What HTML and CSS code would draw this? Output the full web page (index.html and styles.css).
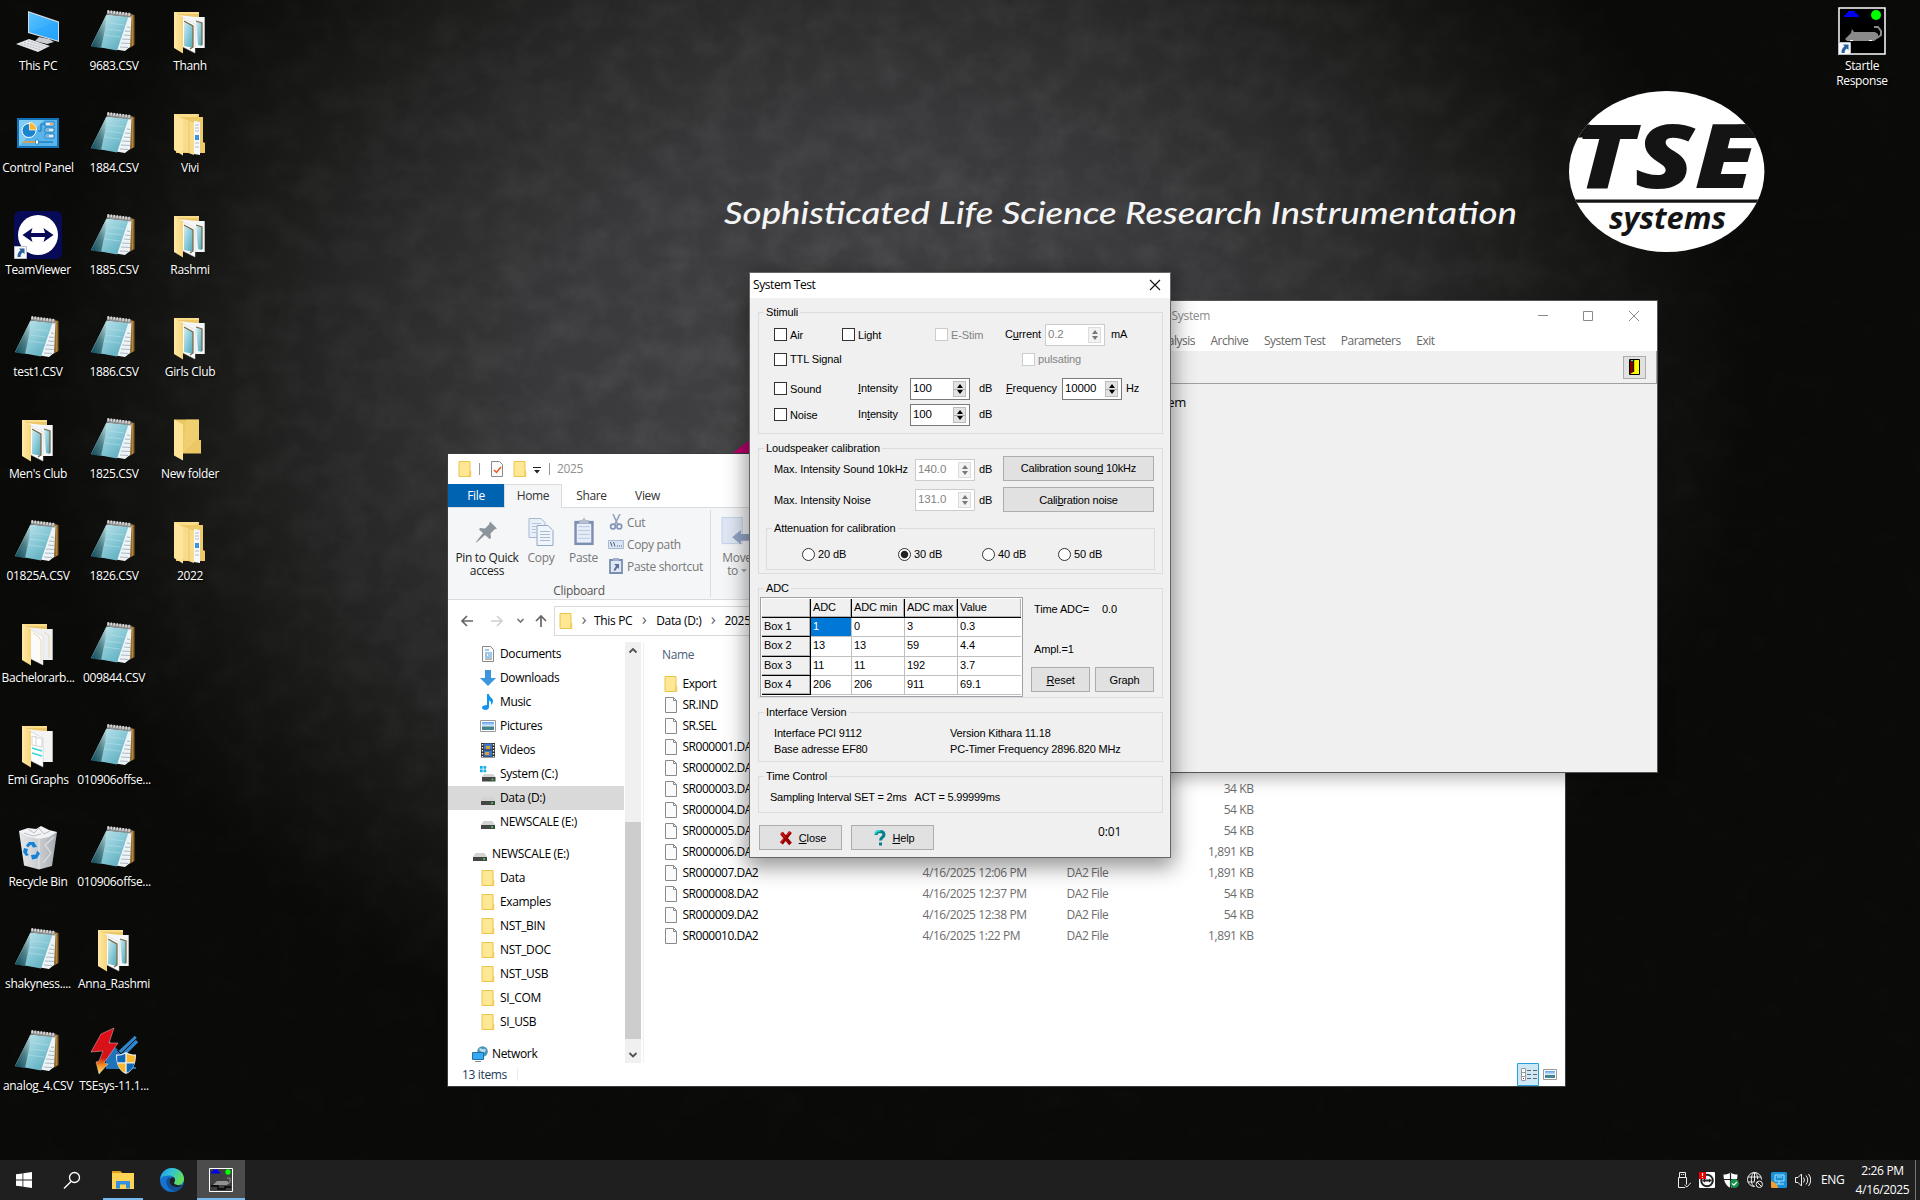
FILE: index.html
```html
<!DOCTYPE html>
<html lang="en">
<head>
<meta charset="utf-8">
<title>Desktop</title>
<link rel="stylesheet" href="styles.css">
</head>
<body>
<svg class="defs" width="0" height="0" aria-hidden="true">
  <defs>
    <linearGradient id="gTeal" x1="0" y1="0" x2="1" y2="1"><stop offset="0" stop-color="#d3eef2"/><stop offset=".5" stop-color="#8ccbd8"/><stop offset="1" stop-color="#4fa5b9"/></linearGradient>
    <linearGradient id="gTealDark" x1="1" y1="0" x2="0" y2="1"><stop offset="0" stop-color="#b9dbe0"/><stop offset=".5" stop-color="#4f7f88"/><stop offset="1" stop-color="#0c4a58"/></linearGradient>
    <linearGradient id="gFold" x1="0" y1="0" x2="1" y2="0"><stop offset="0" stop-color="#ffe9a6"/><stop offset="1" stop-color="#f6d67c"/></linearGradient>
    <linearGradient id="gBlue" x1="0" y1="0" x2="1" y2="1"><stop offset="0" stop-color="#5cc4ff"/><stop offset="1" stop-color="#1b9bf5"/></linearGradient>
    <linearGradient id="gBin" x1="0" y1="0" x2="1" y2="0"><stop offset="0" stop-color="#e6e8ea"/><stop offset=".55" stop-color="#c9cccf"/><stop offset="1" stop-color="#a7abb0"/></linearGradient>
    <linearGradient id="gRed" x1="0" y1="0" x2="0" y2="1"><stop offset="0" stop-color="#e30c17"/><stop offset=".65" stop-color="#d21419"/><stop offset=".8" stop-color="#f08a1c"/><stop offset="1" stop-color="#ffe070"/></linearGradient>
    <linearGradient id="gEdge" x1="0" y1="0" x2="1" y2=".4"><stop offset="0" stop-color="#1f9be6"/><stop offset=".5" stop-color="#32c3d4"/><stop offset="1" stop-color="#62de5a"/></linearGradient>
    <linearGradient id="gSky" x1="0" y1="0" x2="0" y2="1"><stop offset="0" stop-color="#5a9ff0"/><stop offset=".5" stop-color="#d8ecfa"/><stop offset=".65" stop-color="#3c7f86"/><stop offset="1" stop-color="#4b8a99"/></linearGradient>
  </defs>
  <symbol id="notepad" viewBox="0 0 48 48">
    <path d="M41 7l3.500 1v30l-5 3z" fill="#8a6428"/><path d="M42.300 8v31" stroke="#c79a4f" stroke-width=".8"/>
    <path d="M39 8l2.500 1-1.500 31-5 4-24-4z" fill="#eef3f6"/>
    <path d="M37 20l3 .5M35 24l5 .5M34 28l6 .5M32 32l8 .5M31 36l9 .5M30 40l8 .5" stroke="#a9bac6" stroke-width="1.100"/>
    <path d="M16.500 7.500l22 2L27 43.500l-16-3L1 39z" fill="url(#gTeal)"/>
    <path d="M16.500 7.500L1 39.500l10 1.500 4.500-21z" fill="url(#gTealDark)"/>
    <path d="M16 22l16 2M14 28l16 2M19 16l15 2" stroke="#bfe3ea" stroke-width=".7" opacity=".7"/>
    <path d="M17 5.500l24 3" stroke="#8e8e8e" stroke-width="4"/><path d="M17.500 4.500l23.500 3" stroke="#dcdcdc" stroke-width="3" stroke-dasharray="1.500 1.500"/>
  </symbol>
  <symbol id="folderBase" viewBox="0 0 48 48">
    <path d="M8 5h25v23h2v11H8z" fill="#edc866"/><path d="M8 5h25v2H10z" fill="#f9dd8c"/>
  </symbol>
  <symbol id="folderFlap" viewBox="0 0 48 48"><path d="M8 5l9 5v36.500L8 41z" fill="url(#gFold)"/></symbol>
  <symbol id="folderNotes" viewBox="0 0 48 48">
    <use href="#folderBase"/>
    <path d="M12 8l18 2 8.700 0v31H28z" fill="#f4f6f8"/>
    <path d="M15 10l14 7v29l-12-6z" fill="#fff" stroke="#c8c8c8" stroke-width=".5"/>
    <path d="M18 14l9 5v22l-9-2z" fill="url(#gTeal)"/><path d="M18 14l9 5v21l-3 2" fill="none" stroke="#7d6a48" stroke-width="1.300"/>
    <path d="M30 14l6 2v23l-4-1z" fill="url(#gTeal)"/><path d="M30 14l6 2v22" fill="none" stroke="#7d6a48" stroke-width="1.300"/>
    <use href="#folderFlap"/>
  </symbol>
  <symbol id="folderDocs" viewBox="0 0 48 48">
    <use href="#folderBase"/>
    <path d="M12 8l18 2 8.700 0v31H28z" fill="#eef0f2"/><path d="M30 13l5 4v22" fill="none" stroke="#ead9a8"/>
    <path d="M15 10l14 7v29l-12-6z" fill="#fbfbfb" stroke="#ccc" stroke-width=".5"/><path d="M19 14l6 4 2 4v21" fill="none" stroke="#ead9a8"/>
    <use href="#folderFlap"/>
  </symbol>
  <symbol id="folderGraphs" viewBox="0 0 48 48">
    <use href="#folderBase"/>
    <path d="M12 8l18 2 8.700 0v31H28z" fill="#f4f4f4"/>
    <path d="M15 10l14 7v29l-12-6z" fill="#fff" stroke="#bbb" stroke-width=".5"/><path d="M18 15l10 3v8l-10-2zM22 15v10" fill="none" stroke="#c8c8c8" stroke-width=".8"/><path d="M18 27l10 3M18 32l10 3" stroke="#35d5dc" stroke-width="1.500"/>
    <use href="#folderFlap"/>
  </symbol>
  <symbol id="folderNested" viewBox="0 0 48 48">
    <path d="M8 5h25v3h4v25l2 1v10H10z" fill="#eec967"/><path d="M8 5h25l-3 3H11z" fill="#f9dd8c"/>
    <path d="M28 12l6 1v33l-6-1z" fill="#f6f8fa"/><path d="M29 16h4M29 19h4M29 22h4M29 34h4M29 38h4" stroke="#aab" stroke-width=".8"/><path d="M29 26h4v5h-4z" fill="#3b93d8"/>
    <path d="M14 8l14 6v32l-14-5z" fill="#f8dc8a"/><path d="M23 12v32" stroke="#e8c870"/>
    <path d="M8 5l9 5v36.500L8 41z" fill="#ffe59b"/>
  </symbol>
  <symbol id="folderEmpty" viewBox="0 0 48 48"><path d="M8 4.500h25v20.500h2v13.500H8z" fill="#ecc865"/><path d="M20 4.500h13v18L17 38z" fill="#f4d67d" opacity=".5"/><path d="M8 4.500l9 5v36L8 40.500z" fill="#ffe498"/></symbol>
  <symbol id="thisPc" viewBox="0 0 48 48">
    <path d="M14 4l31 10.500v20.500L14 26z" fill="#d6dbe0"/><path d="M15 5.500l29 10v18L15 25z" fill="url(#gBlue)"/><path d="M15 25L44 15.500v18z" fill="#2aa7ff" opacity=".5"/>
    <path d="M25 30l10 2 5 3-7 2-12-3z" fill="#c9ced4"/><path d="M2 37l13-5 21 7-12 6z" fill="#e5e7ea"/><path d="M7 37l20 6M10 35.500l20 6M14 34l19 6" stroke="#a9adb4" stroke-width=".8" stroke-dasharray="2 1"/>
  </symbol>
  <symbol id="controlPanel" viewBox="0 0 48 48">
    <path d="M3 9h42v30H3z" fill="#1272b5"/><path d="M5 11h38v26H5z" fill="#7fccf5"/><path d="M5 37L30 11h13v26z" fill="#59b4ec"/>
    <circle cx="15" cy="21.500" r="7" fill="#1a84cf" stroke="#fff"/><path d="M15.500 21V13.500a7 7 0 0 1 7 7.500z" fill="#ffb52e" stroke="#fff" stroke-width=".7"/>
    <path d="M24 22h3v-7h4" fill="none" stroke="#1272b5"/><path d="M31 13h9v4h-9zM31 19h9v4h-9zM31 25h9v4h-9z" fill="#d8f0fc" stroke="#1272b5" stroke-width=".9"/><path d="M36 15h3" stroke="#ff8b1f" stroke-width="1.500"/><path d="M32 21h3M32 27h3" stroke="#1272b5"/>
    <path d="M9 33h14" stroke="#ff9b1f" stroke-width="1.400"/><path d="M23 33h16" stroke="#1272b5" stroke-width="1.200"/><path d="M21.500 31h3v4h-3z" fill="#fff" stroke="#1272b5" stroke-width=".7"/>
  </symbol>
  <symbol id="shortcut" viewBox="0 0 13 13"><path d="M.5.5h12v12H.5z" fill="#f6f8fb" stroke="#b9bfc7"/><path d="M5 2.500h5.500V8L8.800 6.400C7 7.500 6.500 9 6.700 11H3.600C3.300 8 4.500 5.800 6.600 4.300z" fill="#2a5f9e"/></symbol>
  <symbol id="teamviewer" viewBox="0 0 48 48"><rect width="48" height="48" rx="6" fill="#070a57"/><circle cx="24" cy="24" r="20" fill="#fff"/><path d="M8.500 24l10-7-1.500 5h14l-1.500-5 10 7-10 7 1.500-5H17l1.500 5z" fill="#070a57"/><use href="#shortcut" x="0" y="35" width="13" height="13"/></symbol>
  <symbol id="recycle" viewBox="0 0 48 48">
    <path d="M5 8l38 1-5 34-13 3.500-15-4z" fill="url(#gBin)"/><path d="M5 8l9-3 8 1 5-3 8 4 8 2-8 5-10 2-13-3z" fill="#f2f3f4"/><path d="M14 6l6 4 5-5 5 6 6-3M10 10l9 3 8-2" fill="none" stroke="#b4b8bc" stroke-width=".9"/><path d="M25 15v31M40 14l-9 8 6 8-8 10" fill="none" stroke="#dfe2e4" stroke-width="1.200"/>
    <path d="M15 19l5 0 3 5-4 .5-2-3-3 3-2-2zM10 25l4 1-1 4 2 2-3 1-3-4zM17 32l5-.5 1-4 3 3-3 5-5 1z" fill="#1582d8"/>
  </symbol>
  <symbol id="shield" viewBox="0 0 20 22"><path d="M10 0c3 2 6 2.500 10 2.500C20 12 17 19 10 22 3 19 0 12 0 2.500 4 2.500 7 2 10 0z" fill="#e9eef2"/><path d="M9.300 1.800v8.500H1.400c-.2-2-.3-4-.3-6.500C4.500 3.800 7 3 9.300 1.800zM10.700 11.500h7.700c-1 4-3.500 7.500-7.700 9.300z" fill="#1167b8"/><path d="M10.700 1.800v8.500h7.900c.2-2 .3-4 .3-6.500-3.400 0-5.900-.8-8.200-2zM9.300 11.500H1.600c1 4 3.500 7.500 7.700 9.300z" fill="#fdb92e"/></symbol>
  <symbol id="tseSetup" viewBox="0 0 48 48"><path d="M15 10l17 17-2 15H16z" fill="#1f73b8"/><path d="M30 25L46 10M33 28L47 14" stroke="#2f86cc" stroke-width="3.500"/><path d="M31 27L47 11M27 23l8 8" stroke="#07121c" stroke-width="1"/><path d="M40 41h6" stroke="#1f73b8" stroke-width="2"/><path d="M24 1L11 7 1 25l12-1L9 34 6 35l3 12 9-10-4-1 14-20H19z" fill="url(#gRed)" stroke="#fff" stroke-opacity=".6" stroke-width=".6"/><use href="#shield" x="26" y="25" width="20" height="22"/></symbol>
  <symbol id="startle" viewBox="0 0 48 48"><path d="M1 1h46v46H1z" fill="#000" stroke="#fff" stroke-width="1.500"/><path d="M10 4h7v2h2v2h2v2H6V8h2V6h2z" fill="#0000f0"/><circle cx="38" cy="8" r="5" fill="#0f0"/><path d="M7 32l6-6 1-4 2 3h21l3 2v4l-4 3H9z" fill="#8a8a8a"/><path d="M36 20h4l3 4v4l-4 3" fill="none" stroke="#8a8a8a" stroke-width="2"/><path d="M12 33.500h3M31 33.500h3" stroke="#fff"/></symbol>
  <symbol id="startleTask" viewBox="0 0 24 24"><path d="M.5.500h23v23H.5z" fill="#3f3f3f" stroke="#fff"/><path d="M4 1.500h5v2h2v2H2v-2h2z" fill="#0000e8"/><circle cx="19" cy="4" r="2.700" fill="#0f0"/><path d="M4 17l4-4 10 0 2 2-2 2z" fill="#929292"/><path d="M18 10h3v4l-2 2" fill="none" stroke="#929292"/><path d="M2 18h7v3h7v-2h6" fill="none" stroke="#000" stroke-width="1.300"/></symbol>
  <symbol id="fold16" viewBox="0 0 16 16"><path d="M2 .5h11v9.500h.7v5.500H2z" fill="#ffe794" stroke="#e9c64e"/><path d="M12 15V10.500l1.500-.5v5z" fill="#f5cf5c"/></symbol>
  <symbol id="file16" viewBox="0 0 16 16"><path d="M2.500.5h8l3 3v12h-11z" fill="#fbfbfb" stroke="#8a8a8a"/><path d="M10.500.5v3h3" fill="none" stroke="#8a8a8a"/></symbol>
  <symbol id="doc16" viewBox="0 0 16 16"><path d="M2.500.5h8l3 3v12h-11z" fill="#fbfbfb" stroke="#8a8a8a"/><path d="M5 4h4M5 7h7M8 9h4M5 11h7" stroke="#3d9bd8"/><path d="M5 9h2M5 13h7" stroke="#777"/></symbol>
  <symbol id="down16" viewBox="0 0 16 16"><path d="M5 0h6v8h5l-8 8-8-8h5z" fill="#3c96dd"/></symbol>
  <symbol id="music16" viewBox="0 0 16 16"><path d="M7 0h2c0 3 4 4 4 7 0 2-1 3-2 4 .5-3-.5-4-2-4.500V13c0 2-1.500 3-3.500 3S2 15 2 13.500 4 11 7 11z" fill="#1195f0"/></symbol>
  <symbol id="pic16" viewBox="0 0 16 16"><path d="M.5 2.500h15v11H.5z" fill="#fff" stroke="#9a9a9a"/><path d="M2 4h12v8H2z" fill="url(#gSky)"/></symbol>
  <symbol id="vid16" viewBox="0 0 16 16"><path d="M1 1h14v14.500H1z" fill="#333"/><path d="M4 1.500h8v6H4zM4 8.500h8v6H4z" fill="#3d76c4"/><path d="M6 4h4v3H6zM5 10h4v3H5z" fill="#d5a043"/><path d="M2.500 2v13M13.500 2v13" stroke="#eee" stroke-width="1.400" stroke-dasharray="1.500 1.500"/></symbol>
  <symbol id="drive16" viewBox="0 0 16 16"><path d="M3.500 7h9L15 11H1z" fill="#d2d2d2"/><path d="M1 11h14v4H1z" fill="#454545"/><path d="M11 13h2" stroke="#35e04a" stroke-width="1.500"/></symbol>
  <symbol id="win16" viewBox="0 0 16 16"><path d="M4 8h9l2.500 3H2z" fill="#d2d2d2"/><path d="M2 11h13.500v4.500H2z" fill="#454545"/><path d="M11.500 13.500h2" stroke="#35e04a" stroke-width="1.500"/><path d="M0 0h2.700v2.700H0zM3.500 0h2.700v2.700H3.500zM0 3.500h2.700v2.700H0zM3.500 3.500h2.700v2.700H3.500z" fill="#12b0ea"/></symbol>
  <symbol id="net16" viewBox="0 0 16 16"><circle cx="10.500" cy="5.500" r="5.300" fill="#4c93b8"/><path d="M7 3c2-2 3 1 5 0s2 2 1 3-5 0-6-3z" fill="#b8dcea"/><path d="M.5 6.500h11v7H.5z" fill="#34a9f5" stroke="#236fa6"/><path d="M3 15.500h6" stroke="#789" /></symbol>
</svg>

<main class="desktop">
  <svg class="wallpaper" viewBox="0 0 1920 1200" aria-hidden="true">
    <defs>
      <filter id="grain" x="0" y="0" width="100%" height="100%"><feTurbulence type="fractalNoise" baseFrequency=".03 .035" numOctaves="5" seed="8"/><feColorMatrix values="0 0 0 0 .62  0 0 0 0 .62  0 0 0 0 .63  1.200 0 0 0 -.4"/></filter>
      <radialGradient id="glow" gradientUnits="userSpaceOnUse" cx="0" cy="0" r="1" gradientTransform="translate(890 400) scale(860 690)"><stop offset="0" stop-color="#464648"/><stop offset=".4" stop-color="#39393b"/><stop offset=".65" stop-color="#272727"/><stop offset=".85" stop-color="#141412"/><stop offset="1" stop-color="#0a0a08"/></radialGradient>
      <radialGradient id="fade" gradientUnits="userSpaceOnUse" cx="0" cy="0" r="1" gradientTransform="translate(890 400) scale(900 760)"><stop offset="0" stop-color="#fff"/><stop offset="1" stop-color="#1a1a1a"/></radialGradient>
      <mask id="fadeMask"><path d="M0 0h1920v1200H0z" fill="url(#fade)"/></mask>
      <clipPath id="oval"><ellipse cx="1666.700" cy="171.500" rx="97.700" ry="80.500"/></clipPath>
    </defs>
    <path d="M0 0h1920v1200H0z" fill="url(#glow)"/>
    <g mask="url(#fadeMask)"><path d="M0 0h1920v1200H0z" filter="url(#grain)" opacity=".17"/></g>
    <path d="M730 455l21-16v16z" fill="#b8006c"/>
    <text class="tagline" x="724" y="223.500" textLength="793" lengthAdjust="spacingAndGlyphs">Sophisticated Life Science Research Instrumentation</text>
    <ellipse cx="1666.700" cy="171.500" rx="97.700" ry="80.500" fill="#fff"/>
    <g clip-path="url(#oval)">
      <path d="M1560 124.500h30v13h-30zM1738 124.500h36v13h-36z" fill="#111"/>
      <text class="tse" x="1574" y="187.500" textLength="182" lengthAdjust="spacingAndGlyphs">TSE</text>
      <path d="M1560 199.500h214v3.300h-214z" fill="#141414"/>
    </g>
    <text class="systems" x="1609" y="229" textLength="117" lengthAdjust="spacingAndGlyphs">systems</text>
  </svg>

  <section class="icons">
    <div class="ico"><svg><use href="#thisPc"/></svg><span>This PC</span></div>
    <div class="ico"><svg><use href="#controlPanel"/></svg><span>Control Panel</span></div>
    <div class="ico"><svg><use href="#teamviewer"/></svg><span>TeamViewer</span></div>
    <div class="ico"><svg><use href="#notepad"/></svg><span>test1.CSV</span></div>
    <div class="ico"><svg><use href="#folderNotes"/></svg><span>Men's Club</span></div>
    <div class="ico"><svg><use href="#notepad"/></svg><span>01825A.CSV</span></div>
    <div class="ico"><svg><use href="#folderDocs"/></svg><span>Bachelorarb...</span></div>
    <div class="ico"><svg><use href="#folderGraphs"/></svg><span>Emi Graphs</span></div>
    <div class="ico"><svg><use href="#recycle"/></svg><span>Recycle Bin</span></div>
    <div class="ico"><svg><use href="#notepad"/></svg><span>shakyness....</span></div>
    <div class="ico"><svg><use href="#notepad"/></svg><span>analog_4.CSV</span></div>
    <div class="ico"><svg><use href="#notepad"/></svg><span>9683.CSV</span></div>
    <div class="ico"><svg><use href="#notepad"/></svg><span>1884.CSV</span></div>
    <div class="ico"><svg><use href="#notepad"/></svg><span>1885.CSV</span></div>
    <div class="ico"><svg><use href="#notepad"/></svg><span>1886.CSV</span></div>
    <div class="ico"><svg><use href="#notepad"/></svg><span>1825.CSV</span></div>
    <div class="ico"><svg><use href="#notepad"/></svg><span>1826.CSV</span></div>
    <div class="ico"><svg><use href="#notepad"/></svg><span>009844.CSV</span></div>
    <div class="ico"><svg><use href="#notepad"/></svg><span>010906offse...</span></div>
    <div class="ico"><svg><use href="#notepad"/></svg><span>010906offse...</span></div>
    <div class="ico"><svg><use href="#folderNotes"/></svg><span>Anna_Rashmi</span></div>
    <div class="ico"><svg><use href="#tseSetup"/></svg><span>TSEsys-11.1...</span></div>
    <div class="ico"><svg><use href="#folderNotes"/></svg><span>Thanh</span></div>
    <div class="ico"><svg><use href="#folderNested"/></svg><span>Vivi</span></div>
    <div class="ico"><svg><use href="#folderNotes"/></svg><span>Rashmi</span></div>
    <div class="ico"><svg><use href="#folderNotes"/></svg><span>Girls Club</span></div>
    <div class="ico"><svg><use href="#folderEmpty"/></svg><span>New folder</span></div>
    <div class="ico"><svg><use href="#folderNested"/></svg><span>2022</span></div>
  </section>
  <div class="ico startle-icon"><svg viewBox="0 0 48 48"><use href="#startle"/><use href="#shortcut" x="0" y="35" width="13" height="13"/></svg><span>Startle<br>Response</span></div>

  <section class="window explorer">
    <header class="ex-title">
      <svg class="i16"><use href="#fold16"/></svg><i class="bar"></i>
      <svg class="i16 check" viewBox="0 0 16 16"><path d="M2.500.5h8l3 3v12h-11z" fill="#fbfbfb" stroke="#8a8a8a"/><path d="M5 9l2.500 2.500L12 6" fill="none" stroke="#e8571c" stroke-width="1.500"/></svg>
      <svg class="i16 newf"><use href="#fold16"/></svg>
      <svg class="drop" width="8" height="7" viewBox="0 0 8 7"><path d="M0 .5h8" stroke="#222"/><path d="M1 3h6L4 6.500z" fill="#222"/></svg>
      <i class="bar b2"></i><span>2025</span>
    </header>
    <nav class="tabs"><span class="file">File</span><span class="on">Home</span><span class="t3">Share</span><span class="t4">View</span></nav>
    <div class="ribbon">
      <div class="clip">
        <div class="big pin"><svg width="24" height="28" viewBox="0 0 24 28"><path d="M15 4l7 7-2.500 1-4 4 .5 4.500-1.500 1L10 17.500 1.500 25 1 24.500 8 15.500 4 12l1-1.500 5 .5 4-4z" fill="#8c959c"/></svg><span>Pin to Quick<br>access</span></div>
        <div class="big"><svg width="26" height="28" viewBox="0 0 26 28"><path d="M1 1h12l4 4v15H1z" fill="#e8eff8" stroke="#a7b8d2"/><path d="M4 6h9M4 9h9M4 12h4M4 15h4" stroke="#b6c5dc"/><path d="M9 8h11l5 5v15H9z" fill="#f0f5fb" stroke="#93a7c6"/><path d="M12 14h10M12 17h10M12 20h10M12 23h10" stroke="#a9bad5"/></svg><span>Copy</span></div>
        <div class="big"><svg width="22" height="30" viewBox="0 0 22 30"><path d="M1 4h20v25H1z" fill="#7c8eb0"/><path d="M3.500 7h15v19.500h-15z" fill="#e6edf8"/><path d="M5 10h12M5 14h12M5 18h12M5 22h12" stroke="#b9c8e0"/><path d="M6 3h3l2-2.500L13 3h3v4H6z" fill="#b4becd"/></svg><span>Paste</span></div>
        <ul>
          <li><svg width="16" height="16" viewBox="0 0 16 16"><path d="M5 0l4.500 10M12 0L7 10" stroke="#93a2ba" stroke-width="1.600"/><circle cx="5" cy="12.500" r="2.400" fill="none" stroke="#8093b5" stroke-width="1.600"/><circle cx="11.300" cy="12.500" r="2.400" fill="none" stroke="#8093b5" stroke-width="1.600"/></svg>Cut</li>
          <li><svg width="16" height="16" viewBox="0 0 16 16"><path d="M.5 4.500h15v8H.5z" fill="#dbe5f3" stroke="#a7b8d2"/><path d="M2.500 6l1.500 4.500M5.500 6L7 10.500M9 10h1M11 10h1M13 10h1" stroke="#4d5f80"/></svg>Copy path</li>
          <li><svg width="16" height="16" viewBox="0 0 16 16"><path d="M2 2h12v13H2z" fill="#dfe7f2" stroke="#7c8eb0" stroke-width="1.800"/><path d="M5 0h6v3H5z" fill="#9fb0cc"/><path d="M6 6h5v5L9.500 9.500 7 13 5.500 12 8 8z" fill="#5a6f98"/></svg>Paste shortcut</li>
        </ul>
        <b>Clipboard</b>
      </div>
      <div class="big move"><svg width="32" height="30" viewBox="0 0 32 30"><path d="M.5.500h21v27H.5z" fill="#dfe7f4" stroke="#c2d1e8"/><path d="M11 21l9-7.500v4h10v7H20v4z" fill="#93a4c2"/></svg><span>Move<br>to <svg width="6" height="4" viewBox="0 0 6 4"><path d="M0 0h6L3 3.500z" fill="#aaa"/></svg></span></div>
    </div>
    <div class="address">
      <svg width="106" height="18" viewBox="0 0 106 18" fill="none" stroke-width="1.700"><path d="M25 9H14M19 4l-5 5 5 5" stroke="#666"/><path d="M43 9h11M49 4l5 5-5 5" stroke="#d0d0d0"/><path d="M69.500 7l3 3 3-3" stroke="#777"/><path d="M93 15V4M88 9l5-5 5 5" stroke="#666"/></svg>
      <div class="path"><svg class="i16"><use href="#fold16"/></svg><i class="c1">›</i><span>This PC</span><i class="c2">›</i><span>Data (D:)</span><i class="c3">›</i><span>2025</span></div>
    </div>
    <div class="ex-body">
      <ul class="tree">
        <li><svg><use href="#doc16"/></svg>Documents</li><li><svg><use href="#down16"/></svg>Downloads</li><li><svg><use href="#music16"/></svg>Music</li><li><svg><use href="#pic16"/></svg>Pictures</li><li><svg><use href="#vid16"/></svg>Videos</li><li><svg><use href="#win16"/></svg>System (C:)</li><li class="sel"><svg><use href="#drive16"/></svg>Data (D:)</li><li><svg><use href="#drive16"/></svg>NEWSCALE (E:)</li>
        <li class="root"><svg><use href="#drive16"/></svg>NEWSCALE (E:)</li>
        <li><svg><use href="#fold16"/></svg>Data</li><li><svg><use href="#fold16"/></svg>Examples</li><li><svg><use href="#fold16"/></svg>NST_BIN</li><li><svg><use href="#fold16"/></svg>NST_DOC</li><li><svg><use href="#fold16"/></svg>NST_USB</li><li><svg><use href="#fold16"/></svg>SI_COM</li><li><svg><use href="#fold16"/></svg>SI_USB</li>
        <li class="root"><svg><use href="#net16"/></svg>Network</li>
      </ul>
      <div class="scroll"><svg width="16" height="17" viewBox="0 0 16 17"><path d="M4.500 10.500L8 7l3.500 3.500" fill="none" stroke="#505050" stroke-width="1.800"/></svg><i></i><svg width="16" height="24" viewBox="0 0 16 24"><path d="M4.500 14l3.500 3.500 3.500-3.500" fill="none" stroke="#505050" stroke-width="1.800"/></svg></div>
      <div class="files">
        <h4>Name</h4>
        <div class="row"><svg><use href="#fold16"/></svg><span>Export</span></div>
        <div class="row"><svg><use href="#file16"/></svg><span>SR.IND</span></div>
        <div class="row"><svg><use href="#file16"/></svg><span>SR.SEL</span></div>
        <div class="row"><svg><use href="#file16"/></svg><span>SR000001.DA2</span></div>
        <div class="row"><svg><use href="#file16"/></svg><span>SR000002.DA2</span></div>
        <div class="row"><svg><use href="#file16"/></svg><span>SR000003.DA2</span><em></em><em></em><em>34 KB</em></div>
        <div class="row"><svg><use href="#file16"/></svg><span>SR000004.DA2</span><em></em><em></em><em>54 KB</em></div>
        <div class="row"><svg><use href="#file16"/></svg><span>SR000005.DA2</span><em></em><em></em><em>54 KB</em></div>
        <div class="row"><svg><use href="#file16"/></svg><span>SR000006.DA2</span><em></em><em></em><em>1,891 KB</em></div>
        <div class="row"><svg><use href="#file16"/></svg><span>SR000007.DA2</span><em>4/16/2025 12:06 PM</em><em>DA2 File</em><em>1,891 KB</em></div>
        <div class="row"><svg><use href="#file16"/></svg><span>SR000008.DA2</span><em>4/16/2025 12:37 PM</em><em>DA2 File</em><em>54 KB</em></div>
        <div class="row"><svg><use href="#file16"/></svg><span>SR000009.DA2</span><em>4/16/2025 12:38 PM</em><em>DA2 File</em><em>54 KB</em></div>
        <div class="row"><svg><use href="#file16"/></svg><span>SR000010.DA2</span><em>4/16/2025 1:22 PM</em><em>DA2 File</em><em>1,891 KB</em></div>
      </div>
    </div>
    <footer class="status"><span>13 items</span>
      <svg width="22" height="23" viewBox="0 0 22 23"><path d="M.5.500h21v22H.5z" fill="#cce8f6" stroke="#26a0da"/><path d="M4.500 5.500h4v4h-4zM4.500 9.500h4v4h-4zM4.500 13.500h4v4h-4z" fill="#fff" stroke="#999"/><path d="M10 7.500h4M16 7.500h4M10 11.500h4M16 11.500h4M10 15.500h4M16 15.500h4" stroke="#666"/><path d="M6 15h1v1H6z" fill="#d22"/></svg>
      <svg width="14" height="11" viewBox="0 0 14 11"><path d="M.5.500h13v10H.5z" fill="#fff" stroke="#999"/><path d="M2 2h10v7H2z" fill="url(#gSky)"/></svg>
    </footer>
  </section>

  <section class="window startle">
    <header><span>Startle Response System</span>
      <svg width="104" height="12" viewBox="0 0 104 12" fill="none" stroke="#8a8a8a"><path d="M0 5.500h10"/><path d="M45.500 1.500h9v9h-9z"/><path d="M91 1l10 10M101 1L91 11"/></svg>
    </header>
    <nav><span>Analysis</span><span>Archive</span><span>System Test</span><span>Parameters</span><span>Exit</span></nav>
    <div class="tool"><button><svg width="11" height="16" viewBox="0 0 11 16"><path d="M.5.500h10v15H.5z" fill="#ff0" stroke="#000"/><path d="M1 1h3.500v12L1 15z" fill="#800000"/><path d="M4.700 1v12" stroke="#000"/><path d="M2 1h2v1H2z" fill="#0ff"/></svg></button></div>
    <p>Startle Response System</p>
  </section>

  <section class="window dialog">
    <header><span>System Test</span><svg width="12" height="12" viewBox="0 0 12 12"><path d="M1 1l10 10M11 1L1 11" stroke="#111" stroke-width="1.100"/></svg></header>
    <div class="group stimuli">
      <h5>Stimuli</h5>
      <div class="r r1"><label><i></i>Air</label><label><i></i>Light</label><label class="off"><i></i>E-Stim</label><span>C<u>u</u>rrent</span><div class="spin off">0.2<b></b></div><span>mA</span></div>
      <div class="r r2"><label><i></i>TTL Signal</label><label class="off"><i></i>pulsating</label></div>
      <div class="r r3"><label><i></i>Sound</label><span><u>I</u>ntensity</span><div class="spin">100<b></b></div><span>dB</span><span><u>F</u>requency</span><div class="spin">10000<b></b></div><span>Hz</span></div>
      <div class="r r3"><label><i></i>Noise</label><span>In<u>t</u>ensity</span><div class="spin">100<b></b></div><span>dB</span></div>
    </div>
    <div class="group loud">
      <h5>Loudspeaker calibration</h5>
      <div class="r r5"><span>Max. Intensity Sound 10kHz</span><div class="spin off">140.0<b></b></div><span>dB</span><button>Calibration soun<u>d</u> 10kHz</button></div>
      <div class="r r5 n"><span>Max. Intensity Noise</span><div class="spin off">131.0<b></b></div><span>dB</span><button>Cali<u>b</u>ration noise</button></div>
      <div class="group att"><h5>Attenuation for calibration</h5>
        <div class="radios"><label><i></i>20 dB</label><label class="on"><i></i>30 dB</label><label><i></i>40 dB</label><label><i></i>50 dB</label></div>
      </div>
    </div>
    <div class="group adc">
      <h5>ADC</h5>
      <table><tr><th></th><th>ADC</th><th>ADC min</th><th>ADC max</th><th>Value</th></tr>
        <tr><th>Box 1</th><td class="hot">1</td><td>0</td><td>3</td><td>0.3</td></tr>
        <tr><th>Box 2</th><td>13</td><td>13</td><td>59</td><td>4.4</td></tr>
        <tr><th>Box 3</th><td>11</td><td>11</td><td>192</td><td>3.7</td></tr>
        <tr><th>Box 4</th><td>206</td><td>206</td><td>911</td><td>69.1</td></tr></table>
      <div class="side"><p><span>Time ADC=</span><span>0.0</span></p><p>Ampl.=1</p><div><button><u>R</u>eset</button><button>Graph</button></div></div>
    </div>
    <div class="group iface"><h5>Interface Version</h5><div class="two"><span>Interface PCI 9112</span><span>Version Kithara 11.18</span><span>Base adresse EF80</span><span>PC-Timer Frequency 2896.820 MHz</span></div></div>
    <div class="group time"><h5>Time Control</h5><p>Sampling Interval SET = 2ms &nbsp; ACT = 5.99999ms</p></div>
    <div class="foot">
      <button><svg width="14" height="16" viewBox="0 0 14 16"><path d="M2.500 3l9 11M11.500 2L2.500 13.500" stroke="#900" stroke-width="3.600"/><path d="M2 2.500l4 5M11 1.500L8 5M1.500 12.500l3-3.500" stroke="#d22" stroke-width="1.200"/></svg><span><u>C</u>lose</span></button>
      <button><svg width="12" height="16" viewBox="0 0 12 16"><path d="M2 5c0-3 2-3.500 4-3.500s4 1 4 3.300C10 7.500 6.500 7 6.500 10.500M6.500 12.500v3" fill="none" stroke="#058089" stroke-width="3"/><path d="M1.500 4c.5-2.500 2.500-3.500 5-3.200" fill="none" stroke="#20e4e8" stroke-width="1.300"/></svg><span><u>H</u>elp</span></button>
      <output>0:01</output>
    </div>
  </section>

  <footer class="taskbar">
    <div class="tb"><svg width="16" height="16" viewBox="0 0 16 16"><path d="M0 2.300L6.500 1.400v6.200H0zM7.300 1.300L16 0v7.600H7.300zM0 8.400h6.500v6.200L0 13.700zM7.300 8.400H16V16l-8.700-1.300z" fill="#fff"/></svg></div>
    <div class="tb"><svg width="18" height="18" viewBox="0 0 18 18"><circle cx="11.500" cy="6.500" r="5" fill="none" stroke="#fff" stroke-width="1.300"/><path d="M8 10.500L1 17.500" stroke="#fff" stroke-width="1.400"/></svg></div>
    <div class="tb open"><svg width="22" height="18" viewBox="0 0 22 18"><path d="M0 0h8l2 2h12v16H0z" fill="#fcd354"/><path d="M0 0h8l2 2H0z" fill="#e2a019"/><path d="M4 10h14v7.500h-4v-4H8v4H4z" fill="#3290dc"/></svg></div>
    <div class="tb edge"><svg width="24" height="24" viewBox="0 0 24 24"><circle cx="12" cy="12" r="12" fill="#1673cf"/><path d="M.2 11C1 4.500 6 0 12 0c7 0 12 5 12 11 0 3.500-2.500 6-6 6-2.500 0-4-1-4-2 0-.8 1-1.200 1-3 0-2.500-2.500-4.500-6-4.500C5 7.500 1.500 8.500.2 11z" fill="url(#gEdge)"/><path d="M8.500 9.500C6.500 11 6 13 6.500 15.500 7.500 20 11 22.500 15 23.300 19 22.500 21.500 20 22.500 18c-2 1-4 1.300-6 1-4.500-.5-7-3-7-6 0-1.500.5-2.500 1.500-3.300z" fill="#114f96"/><path d="M14 15c0-.8 1-1.200 1-3 0-1-.5-2-1.300-2.800C11 9.300 9.500 11 9.500 13c0 3 3 6 7 6 2.500 0 4.500-.5 6.200-1.800C20 17.500 14 17.300 14 15z" fill="#1f1f1f"/></svg></div>
    <div class="tb active"><svg width="24" height="24"><use href="#startleTask"/></svg></div>
    <div class="tray">
      <svg viewBox="0 0 16 16"><path d="M3.500 5.500h8v10h-8zM4.500.5h6v5h-6z" fill="none" stroke="#eee"/><path d="M6 2.500h1.200M8 2.500h1.200" stroke="#eee"/><path d="M9.500 13l2.500 2 4-4.500" fill="none" stroke="#1f1f1f" stroke-width="3"/><path d="M9.500 13l2.500 2 4-4.500" fill="none" stroke="#ddd"/></svg>
      <svg viewBox="0 0 16 16"><rect width="16" height="16" rx="1" fill="#fff"/><circle cx="8" cy="8.500" r="5.800" fill="none" stroke="#222" stroke-width="2"/><path d="M3 8.500l3-2v1h4v-1l3 2-3 2v-1H6v1z" fill="#222"/><path d="M0 0h7v7H0z" fill="#e80000"/><path d="M3.500 1v3M3.500 5v1" stroke="#fff" stroke-width="1.200"/></svg>
      <svg viewBox="0 0 16 16"><path d="M7.500.5c2 1.500 4 2 7 2 0 6-2 11-7 13.500C2.500 13.500.5 8.500.5 2.500c3 0 5-.5 7-2z" fill="#fff"/><path d="M7.500.5V16M.5 7.500h14" stroke="#1f1f1f" stroke-width="1.200"/><circle cx="11.500" cy="11.500" r="4.500" fill="#17914a"/><path d="M9.300 11.500l1.700 1.700 2.800-3.200" fill="none" stroke="#fff" stroke-width="1.200"/></svg>
      <svg viewBox="0 0 16 16" fill="none" stroke="#eee"><circle cx="7.500" cy="7.500" r="7"/><ellipse cx="7.500" cy="7.500" rx="3.200" ry="7"/><path d="M1 5h13M1 10h13M7.500.5v14"/><circle cx="12" cy="12" r="4.600" fill="#1f1f1f" stroke="#1f1f1f"/><circle cx="12.300" cy="12.300" r="3.200"/><path d="M10 10l4.600 4.600"/></svg>
      <svg viewBox="0 0 16 16"><rect width="16" height="16" rx="1.500" fill="#1791d8"/><path d="M0 9c4 1 7 4 7 7H1.500A1.500 1.500 0 0 1 0 14.500z" fill="#f0a030"/><path d="M4 3h9v6H4zM6 5h5M5 12h8M8 9v3" fill="none" stroke="#a8e2ff"/></svg>
      <svg viewBox="0 0 16 16" fill="none" stroke="#eee"><path d="M.5 5.500h2.500L6.500 2v12L3 10.500H.5z"/><path d="M8.500 5.500q2 2.500 0 5M11 3.500q3.500 4.500 0 9M13.500 2q4.500 6 0 12"/></svg>
    </div>
    <span class="eng">ENG</span><div class="clock">2:26 PM<br>4/16/2025</div>
  </footer>
</main>
</body>
</html>
```
FILE: styles.css
```css
* { box-sizing: border-box; }
body { margin: 0; font: 12px/16px "Open Sans", "Noto Sans", sans-serif; letter-spacing: -.34px; color: #000; }
ul, h4, h5, p { margin: 0; padding: 0; font: inherit; list-style: none; }
i, em { font-style: normal; }
svg { flex: none; display: block; }
.defs { position: absolute; }
.desktop { position: relative; width: 1920px; height: 1200px; overflow: hidden; background: #0a0a08; }
.wallpaper { position: absolute; inset: 0; width: 1920px; height: 1200px; letter-spacing: 0; }
.tagline { font: italic 500 30px Lato, sans-serif; fill: #f4f4f4; }
.tse { font: italic 800 88px "Open Sans", sans-serif; fill: #141414; }
.systems { font: italic 700 30px "Open Sans", sans-serif; fill: #141414; }

.icons { position: absolute; left: 0; top: 0; display: grid; grid-auto-flow: column; grid-template-rows: repeat(11, 102px); grid-auto-columns: 76px; }
.ico { display: flex; flex-direction: column; align-items: center; padding-top: 7px; color: #fff; text-align: center; line-height: 15px; text-shadow: 1px 1px 2px #000; white-space: nowrap; }
.ico svg { width: 48px; height: 48px; margin-bottom: 3px; }
.startle-icon { position: absolute; left: 1824px; top: 0; width: 76px; }

.window { position: absolute; background: #fff; outline: 1px solid #3c3c3c; overflow: hidden; }
.i16 { width: 16px; height: 16px; }

.explorer { left: 448px; top: 454px; width: 1117px; height: 632px; display: flex; flex-direction: column; }
.ex-title { height: 30px; display: flex; align-items: center; padding-left: 9px; color: #8f8f8f; }
.ex-title .bar { width: 1px; height: 12px; background: #999; margin: 0 8px 0 6px; }
.ex-title .check { margin-left: 1px; }
.ex-title .newf { margin-left: 7px; }
.ex-title .drop { margin: 3px 0 0 5px; }
.ex-title .b2 { margin: 0 7px 0 8px; }
.tabs { height: 24px; display: flex; line-height: 24px; border-bottom: 1px solid #dadbdc; color: #333; text-align: center; }
.tabs .file { width: 56px; height: 23px; background: #0063b1; color: #fff; }
.tabs .on { width: 58px; height: 24px; background: #f5f6f7; border: 1px solid #dadbdc; border-bottom: 0; line-height: 22px; }
.tabs .t3 { width: 59px; }
.tabs .t4 { width: 53px; }
.ribbon { height: 92px; background: #f5f6f7; border-bottom: 1px solid #dadbdc; display: flex; padding-top: 2px; color: #777; line-height: 13px; }
.clip { display: grid; grid-template-columns: 78px 30px 55px 99px; grid-template-rows: 72px 15px; width: 263px; height: 87px; border-right: 1px solid #dcdddf; }
.big { display: flex; flex-direction: column; align-items: center; padding-top: 7px; text-align: center; white-space: nowrap; }
.big > svg { height: 29px; margin-bottom: 5px; }
.big span svg { display: inline-block; vertical-align: 2px; }
.pin { color: #222; }
.clip ul { margin-left: -3px; padding-top: 1px; }
.clip li { display: flex; align-items: center; gap: 3px; height: 22px; white-space: nowrap; }
.clip b { grid-column: 1 / -1; text-align: center; font-weight: 400; color: #555; padding-top: 2px; }
.move { width: 52px; }
.address { height: 42px; display: flex; align-items: center; background: #fff; padding-bottom: 1px; }
.path { flex: 1; height: 30px; border: 1px solid #d9d9d9; display: flex; align-items: center; padding-left: 3px; margin-right: 20px; }
.path i { width: 22px; text-align: center; font-size: 17px; line-height: 14px; color: #666; padding-bottom: 3px; }
.path .c1 { width: 20px; }
.path .c2 { width: 24px; }
.path .c3 { width: 23px; }
.ex-body { height: 421px; display: flex; }
.tree { width: 177px; }
.tree li { height: 24px; display: flex; align-items: center; gap: 4px; padding-left: 32px; width: 176px; }
.tree svg { width: 16px; height: 16px; }
.tree .root { margin-top: 8px; padding-left: 24px; }
.tree .sel { background: #d9d9d9; }
.scroll { width: 16px; background: #f0f0f0; display: flex; flex-direction: column; justify-content: space-between; }
.scroll i { height: 217px; margin-top: 162px; background: #cdcdcd; }
.files { flex: 1; margin-left: 2px; border-left: 1px solid #f0f0f0; padding-left: 19px; }
.files h4 { height: 31px; padding-top: 5px; margin-left: -1px; color: #4c607a; }
.row { height: 21px; display: grid; grid-template-columns: 19.500px 240px 144px 94px 93px; align-items: center; letter-spacing: -.48px; }
.row svg { width: 16px; height: 16px; }
.row em { color: #6d6d6d; white-space: nowrap; letter-spacing: -.42px; }
.row em:last-child { text-align: right; }
.status { flex: 1; display: flex; align-items: center; padding: 0 8px 0 14px; color: #1e395b; gap: 4px; }
.status span { margin-right: auto; padding-right: 10px; border-right: 1px solid #ececec; line-height: 13px; }

.startle { left: 780px; top: 301px; width: 877px; height: 471px; background: #f0f0f0; box-shadow: 0 6px 16px rgba(0,0,0,.3); outline-color: #555; }
.startle header { height: 28px; background: #fff; display: flex; align-items: center; justify-content: space-between; padding: 1px 15px 0 0; color: #8d8d8d; }
.startle header span { width: 430px; text-align: right; padding-top: 1px; }
.startle nav { height: 22px; background: #fff; display: flex; gap: 15.500px; color: #686868; padding: 3px 0 0 369px; line-height: 18px; letter-spacing: -.5px; }
.startle nav span:first-child { width: 46px; display: flex; justify-content: flex-end; }
.tool { height: 33px; border: solid #a0a0a0; border-width: 0 1px 1px 0; display: flex; justify-content: flex-end; align-items: center; padding-right: 10px; }
.tool button { width: 23px; height: 23px; padding: 0; display: grid; place-items: center; }
.startle p { width: 406px; text-align: right; padding-top: 10px; line-height: 17px; font-size: 13px; }

button { font: inherit; letter-spacing: inherit; color: #000; background: #e1e1e1; border: 1px solid #adadad; padding: 0; border-radius: 0; }
.dialog { left: 750px; top: 273px; width: 420px; height: 584px; background: #f0f0f0; outline-color: #666; overflow: visible; box-shadow: 0 6px 20px 4px rgba(0,0,0,.42); font: 11px/14px "Liberation Sans", Arial, sans-serif; letter-spacing: -.12px; padding: 0 7px 0 8px; }
.dialog header { height: 25px; margin: 0 -7px 0 -8px; background: #fff; display: flex; justify-content: space-between; align-items: center; padding: 0 9px 2px 3px; font: 12px "Open Sans", sans-serif; letter-spacing: -.4px; }
.group { border: 1px solid #dcdcdc; margin-top: 14px; }
.group h5 { width: max-content; margin: -8px 0 0 5px; padding: 0 2px; background: #f0f0f0; height: 14px; }
.stimuli { height: 122px; }
.r { display: grid; align-items: center; white-space: nowrap; }
.r label, .radios label { display: flex; align-items: center; gap: 3px; }
label i { width: 13px; height: 13px; background: #fff; border: 1px solid #333; }
label.off { color: #838383; }
label.off i { border-color: #ccc; }
.r1 { grid-template-columns: 68px 93px 70px 40px 66px 30px; height: 22px; margin: 4px 0 0 15px; }
.r2 { grid-template-columns: 248px 80px; height: 13px; margin: 7px 0 0 15px; }
.r3 { grid-template-columns: 84px 52px 69px 27px 56px 64px 20px; height: 22px; margin: 12px 0 0 15px; }
.r3 + .r3 { margin-top: 4px; }
.r > span { padding-bottom: 1px; }
.spin { width: 60px; height: 22px; background: #fff; border: 1px solid #7a7a7a; display: flex; justify-content: space-between; padding: 2px 3px 0 2px; font-size: 11.500px; line-height: 14px; }
.spin b { width: 13px; height: 16px; background: linear-gradient(#adadad, #adadad) 0 50% / 100% 1px no-repeat, #e3e3e3; border: 1px solid #bbb; display: flex; flex-direction: column; align-items: center; justify-content: space-between; padding: 2px 0; }
.spin b::before, .spin b::after { content: ""; border: 3.500px solid transparent; border-top: 0; border-bottom: 4px solid #000; }
.spin b::after { border-bottom: 0; border-top: 4px solid #000; }
.r3 .spin, .r1 .spin { margin-top: 1px; }
.spin.off { border-color: #ccc; color: #838383; }
.spin.off b { border-color: #ddd; background: #f2f2f2; }
.spin.off b::before { border-bottom-color: #777; }
.spin.off b::after { border-top-color: #777; }
.loud { height: 126px; }
.r5 { grid-template-columns: 141px 64px 24px 151px; height: 25px; margin-left: 15px; }
.r5 > span { padding: 2px 0 0; }
.r5.n > span { padding: 0; }
.r5 button { height: 25px; letter-spacing: -.2px; }
.r5 .spin { margin-top: 4px; }
.r5.n { margin-top: 7px; }
.r5.n .spin { margin-top: 1px; }
.att { height: 42px; margin: 16px 7px 0 7px; }
.radios { display: grid; grid-template-columns: 96px 84px 76px 60px; margin: 12px 0 0 35px; }
.radios i { border-radius: 50%; }
.radios .on i { background: radial-gradient(circle, #222 0 3.300px, #fff 4.200px); }
.adc { height: 110px; display: grid; grid-template-columns: 272px 1fr; grid-template-rows: 8px 1fr; }
.adc h5 { grid-column: 1 / -1; }
table { width: 263px; height: 100px; margin-left: 1px; border: 1px solid #a0a0a8; background: #fff; border-collapse: separate; border-spacing: 0; padding: 1px; table-layout: fixed; }
tr { height: 19px; }
td, th { padding: 0 0 2px 2px; line-height: 14px; text-align: left; font-weight: 400; border-right: 1px solid #c0c0c0; border-bottom: 1px solid #c0c0c0; height: 19px; }
th { background: #f0f0f0; border-right: 1px solid #000; border-bottom: 1px solid #000; box-shadow: inset -1px -1px 0 #b0b0b0; }
td:last-child, th:last-child { border-right: 0; }
th:nth-child(1) { width: 49px; } th:nth-child(2) { width: 41px; } th:nth-child(3) { width: 53px; } th:nth-child(4) { width: 53px; }
.hot { background: #0078d7; color: #fff; }
.side p { height: 14px; margin: 5px 0 26px 3px; display: flex; }
.side p + p { margin: 0 0 11px 3px; }
.side p span:first-child { width: 68px; }
.side div { display: flex; gap: 5px; }
.side button { width: 59px; height: 25px; }
.iface { height: 50px; }
.two { display: grid; grid-template-columns: 176px 1fr; line-height: 16px; margin: 6px 0 0 15px; white-space: nowrap; letter-spacing: -.18px; }
.time { height: 37px; }
.time p { margin: 7px 0 0 11px; letter-spacing: -.22px; }
.foot { display: flex; gap: 9px; margin: 12px 0 0 1px; }
.foot button { width: 83px; height: 25px; display: flex; align-items: center; justify-content: center; padding-left: 4px; }
.foot button svg { margin-right: 6px; }
.foot output { margin-left: 155px; font: 12px/14px "Open Sans", sans-serif; }

.taskbar { position: absolute; left: 0; right: 0; bottom: 0; height: 40px; background: #1f1f1f; display: flex; align-items: center; color: #fff; }
.tb { width: 48px; height: 40px; display: grid; place-items: center; }
.tb.open { width: 40px; margin: 0 5px 0 7px; border-bottom: 2px solid #76b9ed; border-top: 2px solid transparent; }
.tb.active { background: #4c4c4c; border-bottom: 2px solid #76b9ed; border-top: 2px solid transparent; margin-left: 1px; }
.tray { display: flex; gap: 8px; margin-left: auto; }
.tray svg { width: 16px; height: 16px; }
.eng { margin-left: 10px; width: 29px; }
.clock { width: 66px; margin-right: 4px; border-right: 1px solid #777; text-align: center; line-height: 18.500px; height: 40px; padding-top: 2px; }
```
